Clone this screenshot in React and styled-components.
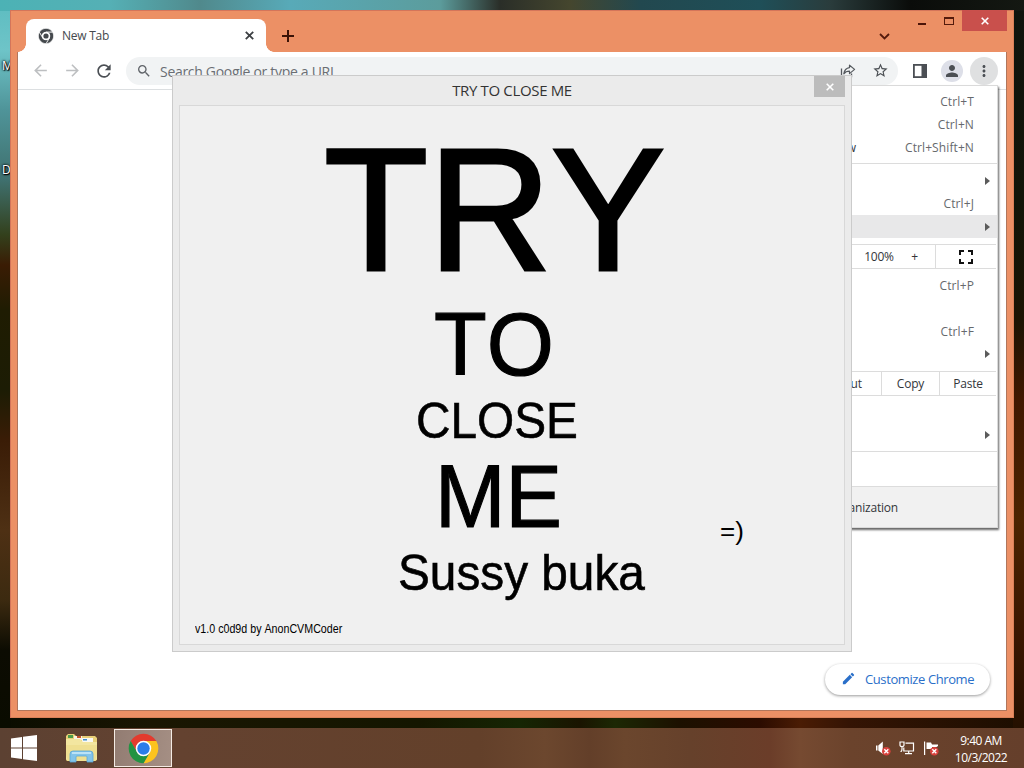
import styled, { createGlobalStyle } from 'styled-components';
import {
  MdArrowBack,
  MdArrowForward,
  MdEdit,
  MdMoreVert,
  MdPerson,
  MdRefresh,
  MdSearch,
  MdStarBorder,
} from 'react-icons/md';

const GlobalStyle = createGlobalStyle`
  * {
    box-sizing: border-box;
  }
  body {
    margin: 0;
    overflow: hidden;
    font-family: 'Open Sans', 'Noto Sans', sans-serif;
    font-size: 12px;
  }
  svg {
    display: block;
    flex-shrink: 0;
  }
`;

const Desktop = styled.div`
  position: relative;
  display: flex;
  flex-direction: column;
  justify-content: flex-end;
  width: 1024px;
  height: 768px;
  overflow: hidden;
  background:
    linear-gradient(
        90deg,
        #4cb2b5 0,
        #55b0b5 110px,
        #50898c 200px,
        #58aab8 290px,
        #5c9c9c 440px,
        #2a2e28 500px,
        #45462e 570px,
        #22484f 640px,
        #1f4f58 760px,
        #2a3c3c 830px,
        #0a0c0a 910px,
        #141812 1024px
      )
      0 0 / 1024px 11px no-repeat,
    linear-gradient(
        180deg,
        #5cbcc0 0,
        #6ec4c8 50px,
        #4f9499 110px,
        #3f706e 180px,
        #33401c 235px,
        #3a1c04 265px,
        #1f1c02 310px,
        #1c1c04 390px,
        #3a1c06 440px,
        #4e3014 530px,
        #3c2a10 600px,
        #0c0c02 650px,
        #0a0c00 728px
      )
      0 0 / 11px 728px no-repeat,
    linear-gradient(
        180deg,
        #10140e 0,
        #121508 200px,
        #1c1403 320px,
        #401800 400px,
        #4c2400 520px,
        #3a1600 640px,
        #241000 728px
      )
      1013px 0 / 11px 728px no-repeat,
    linear-gradient(
      90deg,
      #0a0c00 0,
      #1a1602 150px,
      #141600 420px,
      #162604 520px,
      #1a1400 580px,
      #1c2804 615px,
      #1c1000 680px,
      #2c0c00 760px,
      #4a1c04 800px,
      #341404 850px,
      #1c0e00 1024px
    );
`;

const DesktopLabel = styled.span`
  position: absolute;
  left: 2px;
  top: ${(props) => props.$top}px;
  color: #fff;
  line-height: 16px;
  text-shadow: 1px 1px 1px #000, 0 0 2px #000, 0 0 3px #000;
`;

const BrowserWindow = styled.div`
  position: absolute;
  left: 10px;
  top: 10px;
  width: 1004px;
  height: 708px;
  display: flex;
  flex-direction: column;
  padding: 0 7px 7px;
  background: #ec9065;
  box-shadow: inset 1px 1px 0 #d4755a, inset -1px -1px 0 #d98058;
`;

const TabStrip = styled.div`
  display: flex;
  align-items: flex-end;
  height: 42px;
  padding-left: 1px;
`;

const TabFlare = styled.span`
  width: 8px;
  height: 8px;
  background: radial-gradient(
    circle at ${(props) => (props.$right ? '100%' : '0')} 0,
    transparent 7.5px,
    #fff 8px
  );
`;

const Tab = styled.div`
  display: flex;
  align-items: center;
  width: 240px;
  height: 33px;
  padding: 0 12px 0 12px;
  border-radius: 8px 8px 0 0;
  background: #fff;
  color: #45494d;
`;

const TabTitle = styled.span`
  flex: 1;
  padding-left: 8px;
  letter-spacing: -0.25px;
`;

const NewTab = styled.div`
  display: flex;
  align-items: center;
  height: 33px;
  padding-left: 7px;
`;

const WindowControls = styled.div`
  display: flex;
  align-self: flex-start;
  margin-left: auto;
`;

const TabSearch = styled.div`
  display: flex;
  padding: 23px 18px 0 0;
`;

const Control = styled.div`
  display: flex;
  align-items: center;
  justify-content: center;
  width: ${(props) => props.$width}px;
  height: 21px;
  background: ${(props) => (props.$close ? '#c9504c' : 'transparent')};
`;

const Client = styled.div`
  flex: 1;
  display: flex;
  flex-direction: column;
  border: 1px solid #b0765c;
  border-top: 0;
  background: #fff;
`;

const Toolbar = styled.div`
  display: flex;
  align-items: center;
  height: 38px;
  padding: 0 6px;
  border-bottom: 1px solid #dcdfe1;
`;

const ToolButton = styled.div`
  display: flex;
  align-items: center;
  justify-content: center;
  width: 32px;
  height: 28px;
  color: ${(props) => (props.$disabled ? '#bdbfc1' : '#4b4f54')};
`;

const Round = styled.span`
  display: flex;
  align-items: center;
  justify-content: center;
  width: ${(props) => props.$size}px;
  height: ${(props) => props.$size}px;
  flex-shrink: 0;
  border-radius: 50%;
  background: ${(props) => props.$bg};
`;

const Omnibox = styled.div`
  flex: 1;
  display: flex;
  align-items: center;
  height: 28px;
  margin: 0 6px;
  padding: 0 2px 0 10px;
  border-radius: 14px;
  background: #f1f3f4;
  color: #5f6368;
`;

const Placeholder = styled.span`
  flex: 1;
  padding: 1px 0 0 8px;
  font-size: 14px;
  letter-spacing: -0.3px;
  color: #6a6e73;
`;

const Page = styled.div`
  flex: 1;
  display: flex;
  align-items: flex-end;
  justify-content: flex-end;
  padding: 0 16px 15px;
`;

const Customize = styled.div`
  display: flex;
  align-items: center;
  gap: 9px;
  width: 165px;
  height: 31px;
  padding: 0 0 2px 16px;
  border-radius: 16px;
  background: #fff;
  box-shadow: 0 1px 3px rgba(0, 0, 0, 0.4);
  color: #2a6fc9;
  font-size: 13px;
  letter-spacing: -0.4px;
  white-space: nowrap;
`;

const Menu = styled.div`
  position: absolute;
  left: 700px;
  top: 85px;
  width: 298px;
  height: 443px;
  display: flex;
  flex-direction: column;
  padding-top: 4px;
  border: 1px solid #dadada;
  background: #fff;
  box-shadow: 1px 2px 2px rgba(0, 0, 0, 0.6);
  color: #33363a;
  font-size: 12px;
  letter-spacing: -0.2px;
`;

const MenuRow = styled.div`
  display: flex;
  align-items: center;
  flex-shrink: 0;
  height: ${(props) => props.$height || 23}px;
  padding: 0 ${(props) => (props.$submenu ? 7 : 23)}px 0 32px;
  background: ${(props) => (props.$active ? '#e8e8e9' : 'transparent')};
`;

const Shortcut = styled.span`
  margin-left: auto;
  letter-spacing: 0.1px;
  color: #66696d;
`;

const Arrow = styled.i`
  margin-left: auto;
  border-left: 5px solid #5b5b5b;
  border-top: 4px solid transparent;
  border-bottom: 4px solid transparent;
`;

const Separator = styled.hr`
  width: 100%;
  margin: ${(props) => props.$before}px 0 ${(props) => props.$after}px;
  border: 0;
  border-top: 1px solid #dcdcdc;
`;

const CellRow = styled.div`
  display: flex;
  justify-content: flex-end;
  flex-shrink: 0;
  height: 25px;
  margin: ${(props) => props.$before}px 1px ${(props) => props.$after}px 0;
  border: solid #dcdcdc;
  border-width: 1px 0;
`;

const Cell = styled.span`
  display: flex;
  align-items: center;
  justify-content: center;
  width: ${(props) => props.$width}px;
  padding-right: ${(props) => props.$inset || 0}px;
  border-left: ${(props) => (props.$plain ? 0 : 1)}px solid #dcdcdc;
`;

const ManagedRow = styled.div`
  flex: 1;
  display: flex;
  align-items: center;
  justify-content: flex-end;
  padding-right: 99px;
  border-top: 1px solid #dcdcdc;
  background: #f1f1f1;
`;

const Dialog = styled.div`
  position: absolute;
  left: 172px;
  top: 75px;
  width: 680px;
  height: 577px;
  display: flex;
  flex-direction: column;
  padding: 0 6px 6px;
  border: 1px solid #cbcbcb;
  background: #ebebeb;
`;

const TitleBar = styled.div`
  display: grid;
  grid-template-columns: 31px 1fr 31px;
  height: 29px;
`;

const Title = styled.span`
  text-align: center;
  font-size: 15px;
  line-height: 29px;
  letter-spacing: -0.35px;
  color: #333;
`;

const DialogClose = styled.div`
  display: flex;
  align-items: center;
  justify-content: center;
  height: 21px;
  background: #bcbcbc;
`;

const Form = styled.div`
  flex: 1;
  padding: 17px 0 0;
  border: 1px solid #d8d8d8;
  background: #f0f0f0;
  color: #000;
  font-family: 'Liberation Sans', Arial, sans-serif;
`;

const FormRow = styled.div`
  display: flex;
  align-items: flex-start;
  height: ${(props) => props.$height}px;
  padding-left: ${(props) => props.$left}px;
`;

// The form's typeface is a little narrower and heavier than the fallback
const Label = styled.span`
  font-size: ${(props) => props.$size}px;
  font-kerning: none;
  line-height: 1;
  white-space: nowrap;
  -webkit-text-stroke: ${(props) => props.$stroke || 0}px #000;
  transform: scaleX(${(props) => props.$stretch || 0.96});
  transform-origin: left;
`;

const Smile = styled(Label)`
  margin: 67px 0 0 151px;
`;

const Taskbar = styled.div`
  display: flex;
  align-items: center;
  height: 40px;
  padding-right: 9px;
  background: linear-gradient(
    90deg,
    #5c4132 0,
    #644230 180px,
    #63402a 480px,
    #6c472e 545px,
    #633f29 590px,
    #6b462d 625px,
    #66412b 690px,
    #6b3d29 770px,
    #764a31 800px,
    #6b432c 850px,
    #653f2b 1024px
  );
`;

const TaskButton = styled.div`
  display: flex;
  align-items: center;
  justify-content: center;
  width: ${(props) => props.$width}px;
  height: 38px;
  border: ${(props) => (props.$active ? '1px solid #f4ebe4' : '0')};
  background: ${(props) =>
    props.$active ? 'linear-gradient(100deg, #927c72, #a58f84)' : 'none'};
`;

const Tray = styled.div`
  display: flex;
  align-items: center;
  gap: 8px;
  margin-left: auto;
  padding-right: 7px;
`;

const Clock = styled.div`
  width: 70px;
  margin-right: -1px;
  padding-top: 1px;
  text-align: center;
  line-height: 17px;
  letter-spacing: -0.5px;
  color: #fff;
`;

const ChromeLogo = ({ size, mono }) => {
  const [top, right, left, center] = mono
    ? ['#45494d', '#45494d', '#45494d', '#45494d']
    : ['#e33b2e', '#fcc31e', '#229342', '#2b7de9'];
  const line = mono ? { stroke: '#fff', strokeWidth: 2 } : {};
  return (
    <svg width={size} height={size} viewBox='1 1 46 46'>
      <path
        d='M4.95 13A22 22 0 0 1 43.05 13H24A11 11 0 0 0 14.47 29.5Z'
        fill={top}
        {...line}
      />
      <path
        d='M43.05 13A22 22 0 0 1 24 46L33.53 29.5A11 11 0 0 0 24 13Z'
        fill={right}
        {...line}
      />
      <path
        d='M24 46A22 22 0 0 1 4.95 13L14.47 29.5A11 11 0 0 0 33.53 29.5Z'
        fill={left}
        {...line}
      />
      <circle cx='24' cy='24' r='11.5' fill='#fff' />
      <circle cx='24' cy='24' r={mono ? 7.5 : 9.2} fill={center} />
    </svg>
  );
};

const ShareIcon = () => (
  <svg width='16' height='16' viewBox='0 0 16 16' fill='none' stroke='#55595e'>
    <path d='M1.5 5.5v8h10v-3' strokeWidth='1.3' />
    <path
      d='M9.5 2.2L14.6 6.4L9.5 10.6V8.2C7 8.2 5.2 8.9 3.8 10.8C4.3 7.4 6.2 5 9.5 4.6Z'
      strokeWidth='1.2'
      strokeLinejoin='round'
    />
  </svg>
);

const SidePanelIcon = () => (
  <svg width='14' height='14' viewBox='0 0 14 14'>
    <rect x='0.9' y='0.9' width='12.2' height='12.2' fill='none' stroke='#4b4f54' strokeWidth='1.8' />
    <rect x='8.5' y='1' width='5' height='12' fill='#4b4f54' />
  </svg>
);

const FullscreenIcon = () => (
  <svg width='14' height='14' viewBox='0 0 14 14' fill='none' stroke='#111' strokeWidth='2'>
    <path d='M1 5V1H5M9 1H13V5M13 9V13H9M5 13H1V9' />
  </svg>
);

const CloseGlyph = ({ size, color }) => (
  <svg width={size} height={size} viewBox='0 0 8 8' stroke={color} strokeWidth='1.6'>
    <path d='M0.7 0.7L7.3 7.3M7.3 0.7L0.7 7.3' />
  </svg>
);

const WindowsLogo = () => (
  <svg width='26' height='26' viewBox='0 0 26 26' fill='#fff'>
    <path d='M0 3.4L11 1.9V12.4H0ZM12 1.7L26 0V12.4H12ZM0 13.4H11V24L0 22.5ZM12 13.4H26V26L12 24.2Z' />
  </svg>
);

const FolderIcon = () => (
  <svg width='33' height='30' viewBox='0 0 33 30'>
    <path d='M1 3L3 1H9L11 3H30L32 5V27L30 28H2L1 27Z' fill='#e8cf78' />
    <path d='M3 2H8V5H3Z' fill='#4c9a4a' />
    <path d='M9 3H17V7H9Z' fill='#f7f3e4' />
    <path d='M12 3H16V5H12Z' fill='#c4532f' />
    <path d='M17 5H28V9H17Z' fill='#f9f9f4' />
    <path d='M18 6H22V7.5H18Z' fill='#3c8fd0' />
    <path d='M1 6H15L18 9H32V26L30 28H3L1 26Z' fill='#f3e6a0' />
    <path d='M1 12H32V22L30 28H3L1 22Z' fill='#eedd8d' opacity='0.8' />
    <path
      d='M5 29V21Q5 18 8 18H25Q28 18 28 21V29H22V24Q22 23 21 23H12Q11 23 11 24V29Z'
      fill='#83c4e9'
      stroke='#5aa7d6'
      strokeWidth='0.8'
    />
    <path d='M7 20H26' stroke='#d5effc' strokeWidth='1.4' />
  </svg>
);

const ErrorBadge = () => (
  <>
    <circle cx='11.3' cy='11.2' r='4.3' fill='#d8413c' />
    <path d='M9.3 9.2L13.3 13.2M13.3 9.2L9.3 13.2' stroke='#fff' strokeWidth='1.4' />
  </>
);

const SpeakerIcon = () => (
  <svg width='16' height='16' viewBox='0 0 16 16' fill='#fff'>
    <path d='M1 5.5H2.5V10.5H1ZM3.3 5.5L7.8 1.5V14L3.3 10.5Z' />
    <ErrorBadge />
  </svg>
);

const NetworkIcon = () => (
  <svg width='16' height='16' viewBox='0 0 16 16' fill='none' stroke='#fff' strokeWidth='1.2'>
    <path d='M6.5 3.2H14.5V11H4.8V7.5M9.7 11V13.5M6 13.7H13M3 6.5V9Q3 11.5 1.5 11.5' />
    <path d='M1 2H5V5.2Q5 6.5 3 6.5Q1 6.5 1 5.2Z' />
  </svg>
);

const FlagIcon = () => (
  <svg width='16' height='16' viewBox='0 0 16 16' fill='#fff'>
    <path d='M1 1.5H2.2V15H1ZM3.5 2.5H8L9 4.5H15V6L13.5 7H9V9H3.5Z' />
    <ErrorBadge />
  </svg>
);

const Browser = () => (
  <BrowserWindow>
    <TabStrip>
      <TabFlare />
      <Tab>
        <ChromeLogo size={16} mono />
        <TabTitle>New Tab</TabTitle>
        <CloseGlyph size={9} color='#3c4043' />
      </Tab>
      <TabFlare $right />
      <NewTab>
        <svg width='14' height='14' viewBox='0 0 14 14' stroke='#3b1206' strokeWidth='2'>
          <path d='M7 1V13M1 7H13' />
        </svg>
      </NewTab>
      <WindowControls>
        <TabSearch>
          <svg width='11' height='7' viewBox='0 0 11 7' fill='none' stroke='#551b0c' strokeWidth='1.8'>
            <path d='M1 1L5.5 5.5L10 1' />
          </svg>
        </TabSearch>
        <Control $width={28}>
          <svg width='8' height='11' viewBox='0 0 8 11' fill='#4c1408'>
            <path d='M0 8H8V10H0Z' />
          </svg>
        </Control>
        <Control $width={26}>
          <svg width='10' height='8' viewBox='0 0 10 8' fill='#551b0c' fillRule='evenodd'>
            <path d='M0 0H10V8H0ZM1 2V7H9V2Z' />
          </svg>
        </Control>
        <Control $width={45} $close>
          <CloseGlyph size={8} color='#fff' />
        </Control>
      </WindowControls>
    </TabStrip>
    <Client>
      <Toolbar>
        <ToolButton $disabled>
          <MdArrowBack size={19} />
        </ToolButton>
        <ToolButton $disabled>
          <MdArrowForward size={19} />
        </ToolButton>
        <ToolButton>
          <MdRefresh size={20} />
        </ToolButton>
        <Omnibox>
          <MdSearch size={16} />
          <Placeholder>Search Google or type a URL</Placeholder>
          <ToolButton>
            <ShareIcon />
          </ToolButton>
          <ToolButton>
            <MdStarBorder size={17} />
          </ToolButton>
        </Omnibox>
        <ToolButton>
          <SidePanelIcon />
        </ToolButton>
        <ToolButton>
          <Round $size={22} $bg='#dddfe8'>
            <MdPerson size={18} />
          </Round>
        </ToolButton>
        <ToolButton>
          <Round $size={28} $bg='#dfe0e1'>
            <MdMoreVert size={18} />
          </Round>
        </ToolButton>
      </Toolbar>
      <Page>
        <Customize>
          <MdEdit size={15} />
          Customize Chrome
        </Customize>
      </Page>
    </Client>
  </BrowserWindow>
);

const BrowserMenu = () => (
  <Menu>
    <MenuRow>
      <Shortcut>Ctrl+T</Shortcut>
    </MenuRow>
    <MenuRow>
      <Shortcut>Ctrl+N</Shortcut>
    </MenuRow>
    <MenuRow>
      New Incognito window
      <Shortcut>Ctrl+Shift+N</Shortcut>
    </MenuRow>
    <Separator $before={4} $after={5} />
    <MenuRow $submenu>
      <Arrow />
    </MenuRow>
    <MenuRow>
      <Shortcut>Ctrl+J</Shortcut>
    </MenuRow>
    <MenuRow $submenu $active>
      <Arrow />
    </MenuRow>
    <CellRow $before={6} $after={5}>
      <Cell $width={42} $plain>
        100%
      </Cell>
      <Cell $width={35} $inset={6} $plain>
        +
      </Cell>
      <Cell $width={61}>
        <FullscreenIcon />
      </Cell>
    </CellRow>
    <MenuRow>
      <Shortcut>Ctrl+P</Shortcut>
    </MenuRow>
    <MenuRow />
    <MenuRow>
      <Shortcut>Ctrl+F</Shortcut>
    </MenuRow>
    <MenuRow $submenu $height={22}>
      <Arrow />
    </MenuRow>
    <CellRow $before={6} $after={27}>
      <Cell $width={58}>Cut</Cell>
      <Cell $width={58}>Copy</Cell>
      <Cell $width={57}>Paste</Cell>
    </CellRow>
    <MenuRow $submenu>
      <Arrow />
    </MenuRow>
    <Separator $before={5} $after={34} />
    <ManagedRow>Managed by your organization</ManagedRow>
  </Menu>
);

const CloseMeDialog = () => (
  <Dialog>
    <TitleBar>
      <span />
      <Title>TRY TO CLOSE ME</Title>
      <DialogClose>
        <CloseGlyph size={8} color='#fff' />
      </DialogClose>
    </TitleBar>
    <Form>
      <FormRow $height={177} $left={144}>
        <Label $size={174} $stroke={3} $stretch={0.98}>
          TRY
        </Label>
      </FormRow>
      <FormRow $height={96} $left={254}>
        <Label $size={89} $stroke={1.2} $stretch={0.97}>
          TO
        </Label>
      </FormRow>
      <FormRow $height={56} $left={236}>
        <Label $size={50} $stroke={0.6} $stretch={0.955}>
          CLOSE
        </Label>
      </FormRow>
      <FormRow $height={96} $left={255}>
        <Label $size={89} $stroke={1.2} $stretch={0.95}>
          ME
        </Label>
        <Smile $size={25} $stretch={1.04}>
          =)
        </Smile>
      </FormRow>
      <FormRow $height={75} $left={218}>
        <Label $size={50} $stroke={0.6} $stretch={0.955}>
          Sussy buka
        </Label>
      </FormRow>
      <FormRow $height={12} $left={15}>
        <Label $size={12} $stretch={0.89}>
          v1.0 c0d9d by AnonCVMCoder
        </Label>
      </FormRow>
    </Form>
  </Dialog>
);

const App = () => (
  <>
    <GlobalStyle />
    <Desktop>
      <DesktopLabel $top={58}>M</DesktopLabel>
      <DesktopLabel $top={162}>D</DesktopLabel>
      <Browser />
      <BrowserMenu />
      <CloseMeDialog />
      <Taskbar>
        <TaskButton $width={48}>
          <WindowsLogo />
        </TaskButton>
        <TaskButton $width={66}>
          <FolderIcon />
        </TaskButton>
        <TaskButton $width={58} $active>
          <ChromeLogo size={31} />
        </TaskButton>
        <Tray>
          <SpeakerIcon />
          <NetworkIcon />
          <FlagIcon />
        </Tray>
        <Clock>
          9:40 AM
          <br />
          10/3/2022
        </Clock>
      </Taskbar>
    </Desktop>
  </>
);

export default App;
